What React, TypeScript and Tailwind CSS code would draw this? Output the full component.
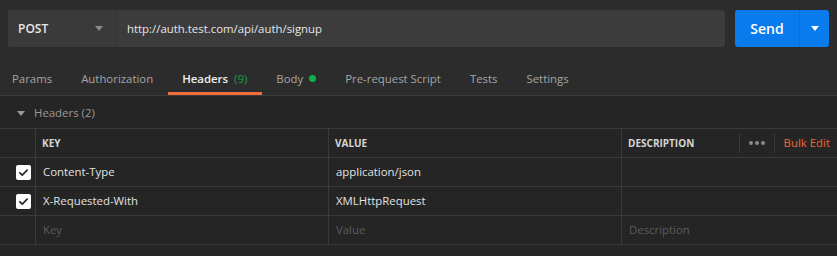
import React from 'react';

const tabs = [
  { label: 'Params' },
  { label: 'Authorization' },
  { label: 'Headers', count: '(9)', active: true },
  { label: 'Body', dot: true },
  { label: 'Pre-request Script' },
  { label: 'Tests' },
  { label: 'Settings' },
];

const rows = [
  { key: 'Content-Type', value: 'application/json' },
  { key: 'X-Requested-With', value: 'XMLHttpRequest' },
];

const Check: React.FC = () => (
  <div className="w-[15px] h-[15px] bg-white rounded-[2px] flex items-center justify-center">
    <svg width="11" height="11" viewBox="0 0 12 12" fill="none">
      <path d="M2 6.3l2.6 2.6L10 3.4" stroke="#2a2a2a" strokeWidth={1.9} strokeLinecap="round" strokeLinejoin="round" />
    </svg>
  </div>
);

const Caret: React.FC<{ color: string }> = ({ color }) => (
  <svg width="8" height="5" viewBox="0 0 8 5">
    <path d="M0 0h8L4 5z" fill={color} />
  </svg>
);

const App: React.FC = () => {
  return (
    <div className="w-[837px] h-[256px] bg-[#2c2c2c] overflow-hidden font-['Open_Sans',sans-serif] text-[11.4px]">
      {/* Request bar */}
      <div className="flex px-2 pt-[10px] pb-[10px] border-b border-[#303030]">
        <div className="flex flex-1 h-[37px] rounded-[3px] overflow-hidden">
          <div className="w-[109px] bg-[#3a3a3a] flex items-center justify-between pl-[10px] pr-[13px] border-r border-[#333]">
            <span className="text-[#e8e8e8] font-semibold text-[12px]">POST</span>
            <Caret color="#8a8a8a" />
          </div>
          <div className="flex-1 bg-[#3c3c3c] flex items-center pl-[10px] text-[#e6e6e6]">
            http://auth.test.com/api/auth/signup
          </div>
        </div>
        <div className="ml-[10px] w-[94px] h-[37px] bg-[#097bed] rounded-[3px] flex">
          <div className="w-[65px] flex items-center justify-center text-white font-semibold text-[14px] border-r border-[#0a6fd4]">
            Send
          </div>
          <div className="flex-1 flex items-center justify-center">
            <Caret color="#ffffff" />
          </div>
        </div>
      </div>

      {/* Tabs */}
      <div className="flex h-[38px] pl-[12px] gap-[29px] border-b border-[#3a3a3a]">
        {tabs.map((t) => (
          <div key={t.label} className="relative flex items-center gap-[6px] pt-[4px]">
            <span className={t.active ? 'text-[#f0f0f0] font-semibold' : 'text-[#a6a6a6]'}>{t.label}</span>
            {t.count && <span className="text-[#1c9c4c]">{t.count}</span>}
            {t.dot && <span className="w-[7px] h-[7px] rounded-full bg-[#0cb04a]" />}
            {t.active && <div className="absolute -left-[14px] -right-[15px] bottom-0 h-[3px] bg-[#f26b3a]" />}
          </div>
        ))}
      </div>

      {/* Body */}
      <div className="bg-[#252525] h-full">
        <div className="h-[32px] flex items-center pl-[17px] pt-[2px] gap-[9px] text-[#9a9a9a]">
          <Caret color="#9a9a9a" />
          <span>Headers (2)</span>
        </div>

        <div className="border-t border-[#3a3a3a]">
          <div className="grid grid-cols-[36px_293px_293px_1fr] h-[29px] border-b border-[#3a3a3a] text-[10px] font-bold text-[#d6d6d6]">
            <div className="border-r border-[#3a3a3a]" />
            <div className="border-r border-[#3a3a3a] flex items-center pl-[6px]">KEY</div>
            <div className="border-r border-[#3a3a3a] flex items-center pl-[6px]">VALUE</div>
            <div className="flex items-center pl-[6px]">
              <span className="flex-1">DESCRIPTION</span>
              <div className="h-[20px] border-l border-[#3a3a3a] flex items-center px-[9px] gap-[2px]">
                <span className="w-[4px] h-[4px] rounded-full bg-[#8a8a8a]" />
                <span className="w-[4px] h-[4px] rounded-full bg-[#8a8a8a]" />
                <span className="w-[4px] h-[4px] rounded-full bg-[#8a8a8a]" />
              </div>
              <div className="h-[20px] border-l border-[#3a3a3a] flex items-center pl-[9px] pr-[7px] text-[11.4px] font-normal text-[#f0653a]">
                Bulk Edit
              </div>
            </div>
          </div>

          {rows.map((r) => (
            <div key={r.key} className="grid grid-cols-[36px_293px_293px_1fr] h-[29px] border-b border-[#3a3a3a] text-[#e2e2e2]">
              <div className="border-r border-[#3a3a3a] flex items-center justify-end pr-[4px]">
                <Check />
              </div>
              <div className="border-r border-[#3a3a3a] flex items-center pl-[7px]">{r.key}</div>
              <div className="border-r border-[#3a3a3a] flex items-center pl-[7px]">{r.value}</div>
              <div />
            </div>
          ))}

          <div className="grid grid-cols-[36px_293px_293px_1fr] h-[29px] border-b border-[#3a3a3a] text-[#5c5c5c]">
            <div className="border-r border-[#3a3a3a]" />
            <div className="border-r border-[#3a3a3a] flex items-center pl-[7px]">Key</div>
            <div className="border-r border-[#3a3a3a] flex items-center pl-[7px]">Value</div>
            <div className="flex items-center pl-[7px]">Description</div>
          </div>
        </div>
      </div>
    </div>
  );
};

export default App;
